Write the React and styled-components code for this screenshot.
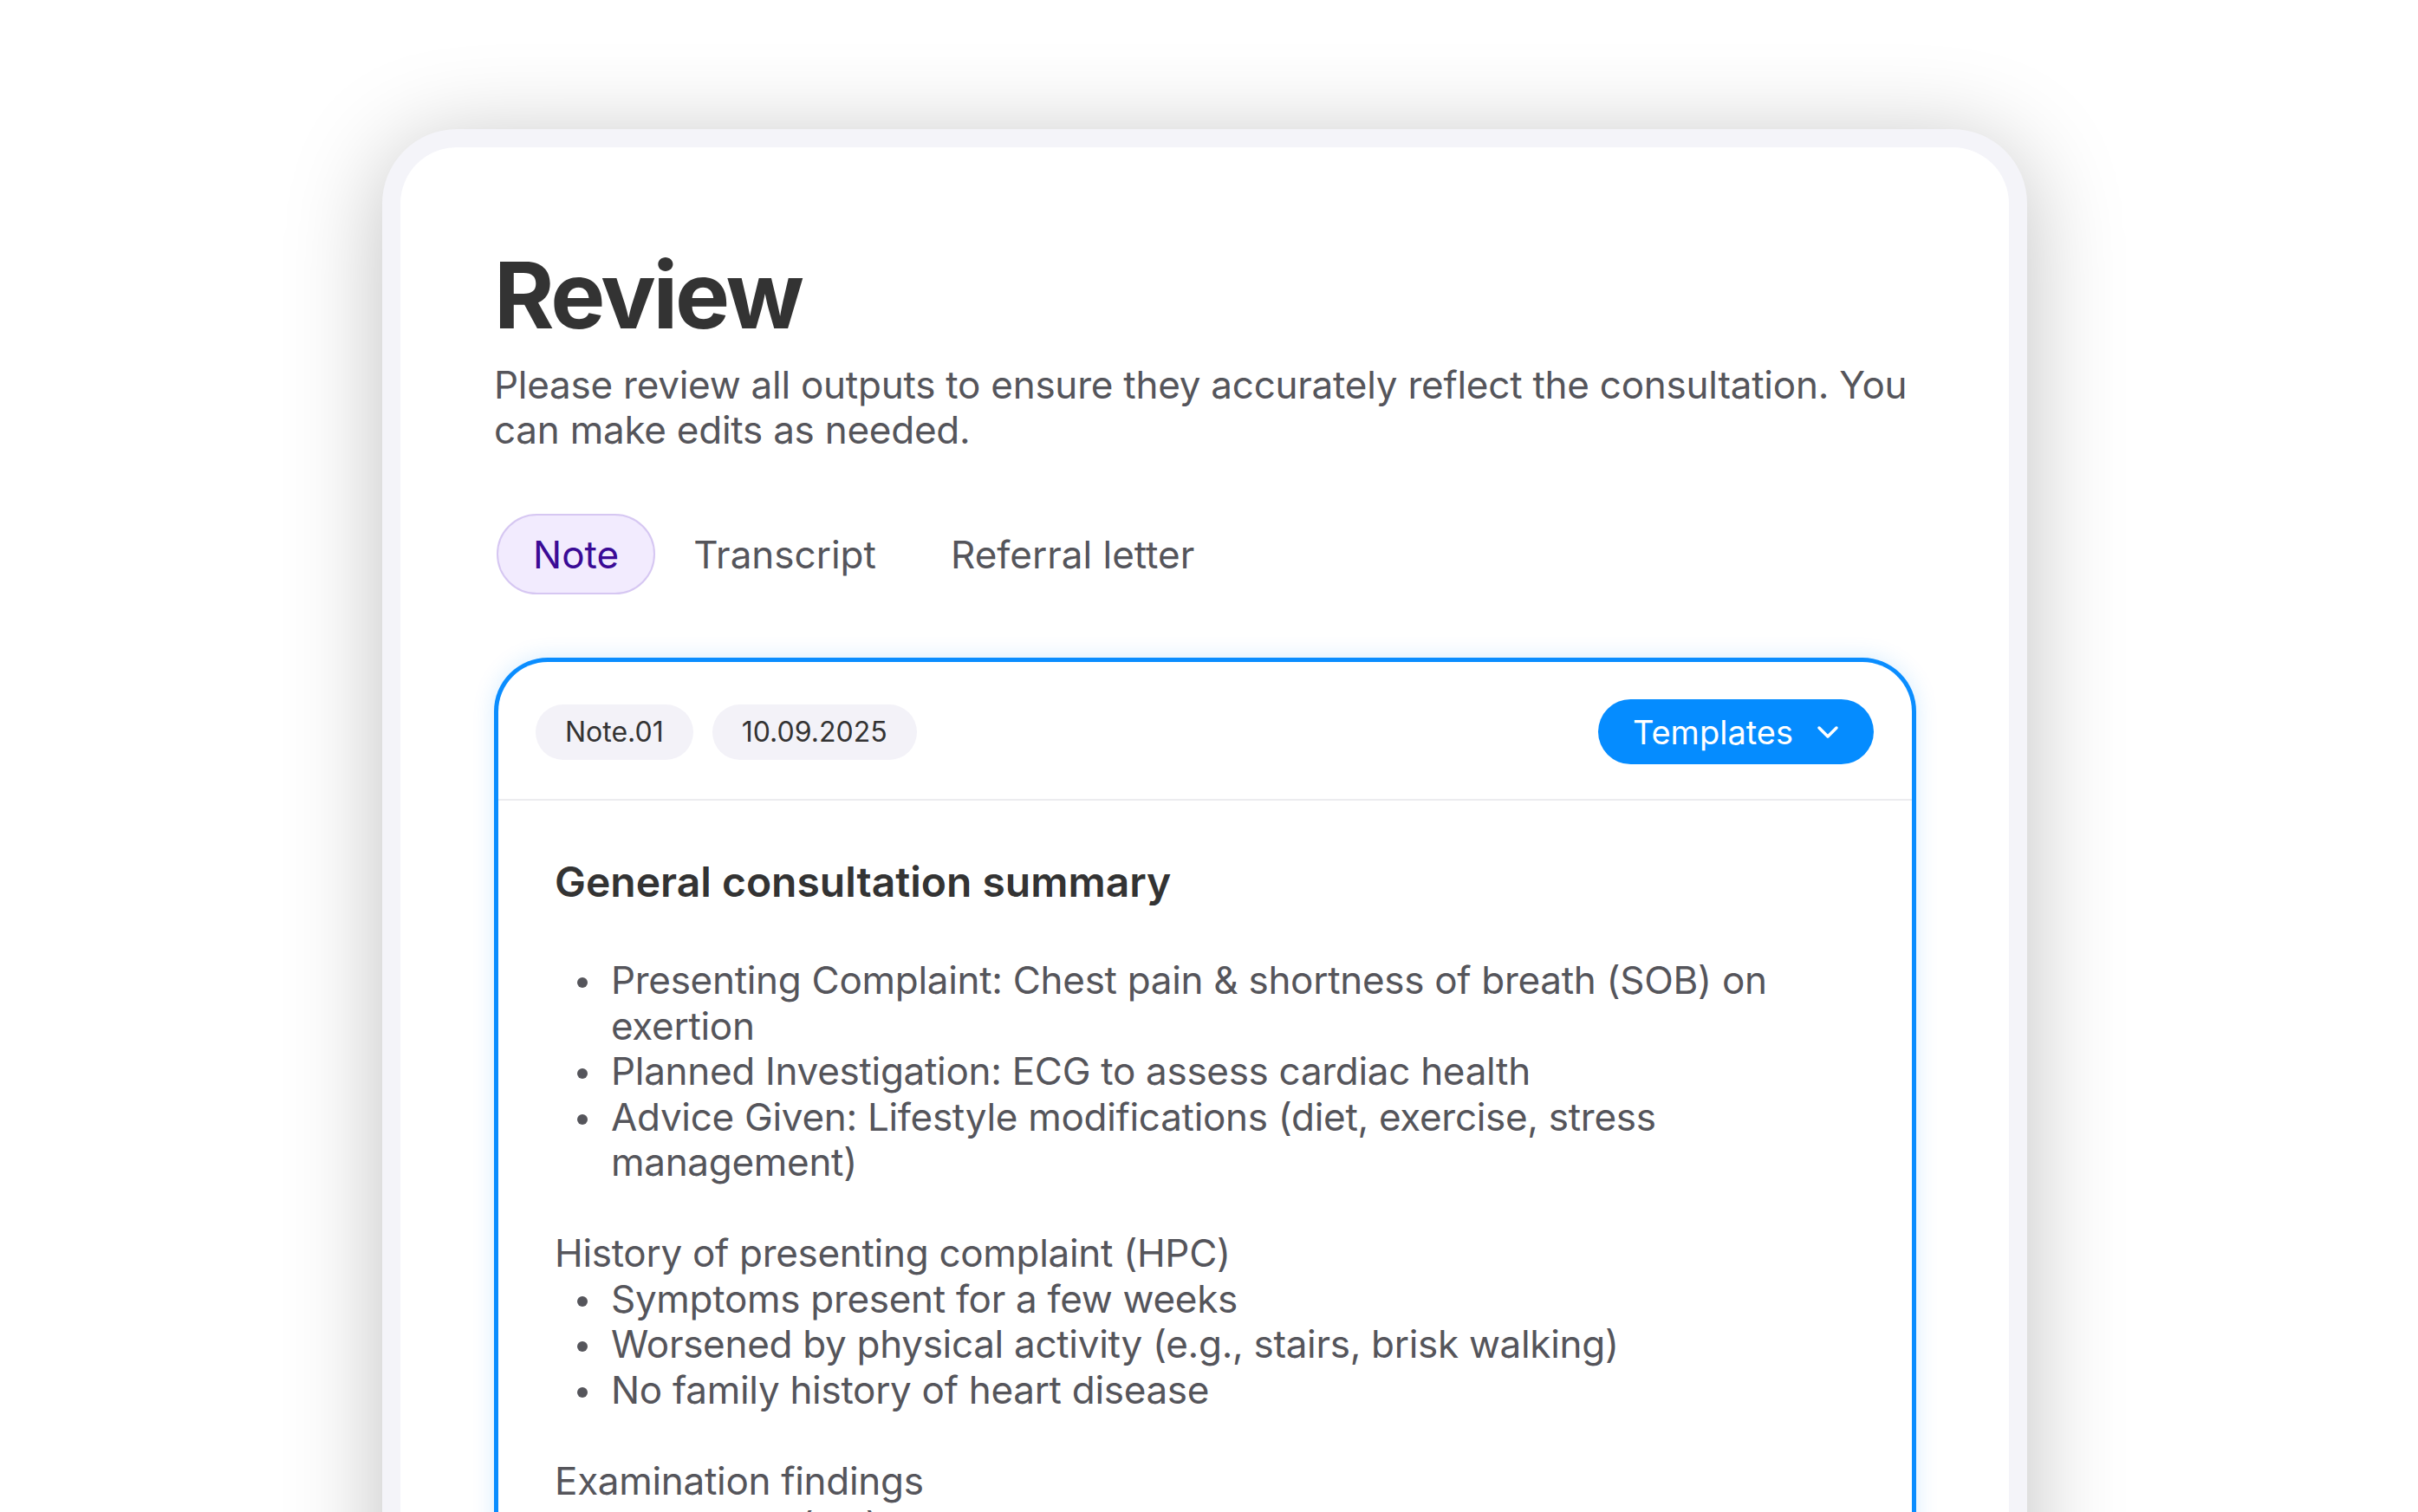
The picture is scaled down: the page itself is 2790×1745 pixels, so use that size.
import React from 'react';
import styled, { createGlobalStyle } from 'styled-components';
import { ChevronDown } from 'lucide-react';

const GlobalStyle = createGlobalStyle`
	html, body {
		margin: 0;
		padding: 0;
		background: #ffffff;
	}

	body {
		font-family: Inter, "Noto Sans", "Liberation Sans", sans-serif;
		-webkit-font-smoothing: antialiased;
	}

	* {
		box-sizing: border-box;
	}
`;

const sections = [
	{
		title: null,
		items: [
			'Presenting Complaint: Chest pain & shortness of breath (SOB) on exertion',
			'Planned Investigation: ECG to assess cardiac health',
			'Advice Given: Lifestyle modifications (diet, exercise, stress management)'
		]
	},
	{
		title: 'History of presenting complaint (HPC)',
		items: [
			'Symptoms present for a few weeks',
			'Worsened by physical activity (e.g., stairs, brisk walking)',
			'No family history of heart disease'
		]
	},
	{
		title: 'Examination findings',
		items: [
			'Heart rate (HR): 88 bpm, regular rhythm',
			'Blood pressure: 138/86 mmHg',
			'Chest clear on auscultation'
		]
	}
];

const tabs = ['Note', 'Transcript', 'Referral letter'];

function App() {
	return (
		<Stage>
			<GlobalStyle />
			<Device>
				<Panel>
					<Title>Review</Title>
					<Lead>
						Please review all outputs to ensure they accurately reflect the consultation. You
						can make edits as needed.
					</Lead>

					<Tabs>
						{tabs.map((tab, i) => (
							<Tab key={tab} $active={i === 0}>{tab}</Tab>
						))}
					</Tabs>

					<NoteCard>
						<CardHeader>
							<Chips>
								<Chip>Note.01</Chip>
								<Chip>10.09.2025</Chip>
							</Chips>
							<TemplatesButton type="button">
								Templates
								<ChevronDown size={40} strokeWidth={2.1} />
							</TemplatesButton>
						</CardHeader>

						<CardBody>
							<SummaryTitle>General consultation summary</SummaryTitle>
							{sections.map((section, i) => (
								<Section key={i}>
									{section.title && <SectionTitle>{section.title}</SectionTitle>}
									<List>
										{section.items.map((item) => (
											<Item key={item}>{item}</Item>
										))}
									</List>
								</Section>
							))}
						</CardBody>
					</NoteCard>
				</Panel>
			</Device>
		</Stage>
	);
}

const Stage = styled.div`
	width: 100%;
	height: 100vh;
	overflow: hidden;
	padding: 149px 0 0 441px;
`;

const Device = styled.div`
	width: 1898px;
	min-height: 1800px;
	padding: 21px 21px 0;
	background: #f4f4f9;
	border-radius: 86px 86px 0 0;
	box-shadow: 0 16px 110px rgba(0, 0, 0, 0.25);
`;

const Panel = styled.div`
	min-height: 1800px;
	background: #ffffff;
	border-radius: 65px 65px 0 0;
	padding: 111px 107px 0 108px;
`;

const Title = styled.h1`
	margin: 0;
	font-size: 106px;
	line-height: 120px;
	font-weight: 700;
	letter-spacing: -0.03em;
	color: #333333;
`;

const Lead = styled.p`
	margin: 17px 0 0;
	font-size: 44px;
	line-height: 52px;
	letter-spacing: -0.25px;
	color: #55555b;
`;

const Tabs = styled.div`
	display: flex;
	gap: 2px;
	margin: 71px 0 0 3px;
`;

const Tab = styled.div`
	height: 93px;
	display: flex;
	align-items: center;
	padding: 0 40px;
	font-size: 44px;
	border-radius: 47px;
	border: 2.5px solid ${({ $active }) => ($active ? '#d6c7f2' : 'transparent')};
	background: ${({ $active }) => ($active ? '#f2ebfe' : 'transparent')};
	color: ${({ $active }) => ($active ? '#3b0b96' : '#55555b')};
`;

const NoteCard = styled.div`
	margin-top: 73px;
	border: 5px solid #0a8dff;
	border-radius: 62px 62px 0 0;
	border-bottom: none;
	box-shadow: 0 0 26px rgba(10, 141, 255, 0.16);
	background: #ffffff;
	min-height: 1200px;
`;

const CardHeader = styled.div`
	display: flex;
	justify-content: space-between;
	align-items: center;
	padding: 43px 44px 40px 43px;
	border-bottom: 2px solid #ececef;
`;

const Chips = styled.div`
	display: flex;
	gap: 22px;
`;

const Chip = styled.span`
	height: 64px;
	display: flex;
	align-items: center;
	padding: 0 34px;
	border-radius: 32px;
	background: #f3f2f8;
	font-size: 32px;
	color: #333333;
`;

const TemplatesButton = styled.button`
	height: 75px;
	display: flex;
	align-items: center;
	gap: 20px;
	padding: 0 33px 0 40px;
	border: none;
	border-radius: 38px;
	background: #058cff;
	color: #ffffff;
	font-family: inherit;
	font-size: 38px;
	font-weight: 400;
	cursor: pointer;
`;

const CardBody = styled.div`
	padding: 65px 65px 0;
	color: #55555b;
	letter-spacing: -0.3px;
`;

const SummaryTitle = styled.h2`
	margin: 0 0 58px;
	font-size: 48px;
	line-height: 58px;
	font-weight: 600;
	letter-spacing: 0;
	color: #333333;
`;

const Section = styled.div`
	& + & {
		margin-top: 52.5px;
	}
`;

const SectionTitle = styled.div`
	font-size: 44px;
	line-height: 52.5px;
`;

const List = styled.ul`
	margin: 0;
	padding: 0;
	list-style: none;
`;

const Item = styled.li`
	display: grid;
	grid-template-columns: 65px 1fr;
	font-size: 44px;
	line-height: 52.5px;

	&::before {
		content: '';
		width: 12px;
		height: 12px;
		margin: 23px 0 0 26px;
		border-radius: 50%;
		background: #55555b;
	}
`;

export default App;
